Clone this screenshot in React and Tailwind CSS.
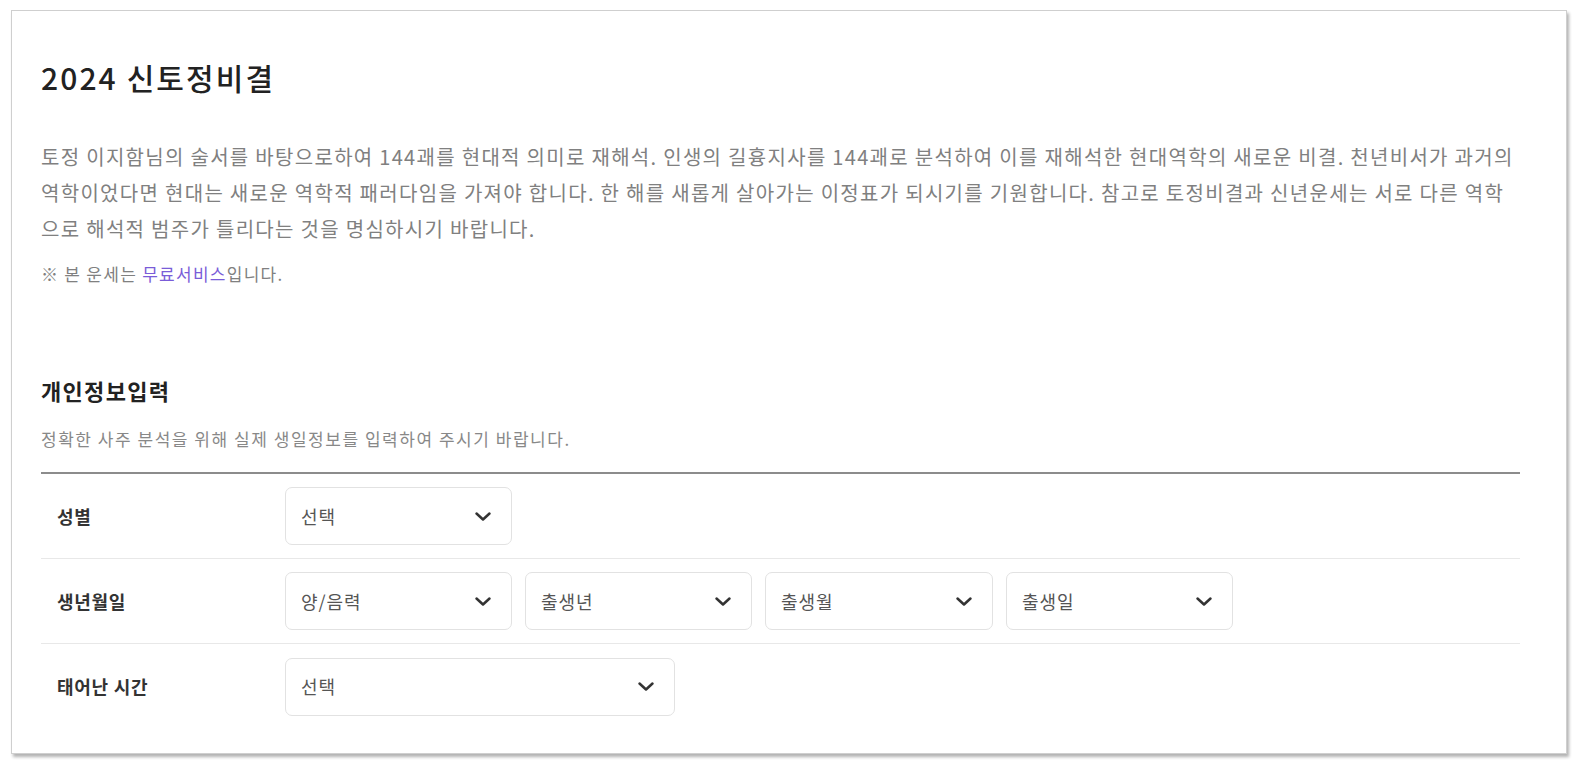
const font = { fontFamily: '"Noto Sans CJK KR", "Noto Sans", sans-serif' };

function Chevron() {
  return (
    <svg width="18" height="11" viewBox="0 0 18 11" fill="none" stroke="#333" strokeWidth="2.5" strokeLinecap="round" strokeLinejoin="round">
      <polyline points="2.5,2.5 9,8.5 15.5,2.5" />
    </svg>
  );
}

function Select({ label, width }) {
  return (
    <div
      className={`${width} h-[58px] flex items-center justify-between pl-[15px] pr-[19px] border border-[#e2e2e2] rounded-[7px] bg-white text-[18px] tracking-[0.05em] text-[#555]`}
    >
      <span>{label}</span>
      <Chevron />
    </div>
  );
}

function Row({ label, last, children }) {
  return (
    <div className={`flex items-center h-[85px] ${last ? '' : 'border-b border-[#e8e8e8]'}`}>
      <div className="w-[244px] pl-[16px] text-[18px] tracking-[0.04em] font-bold text-[#333]">{label}</div>
      <div className="flex items-center gap-[13px]">{children}</div>
    </div>
  );
}

export default function App() {
  return (
    <div className="min-h-screen bg-white pl-[11px] pt-[10px]" style={font}>
      <div className="w-[1556px] h-[744px] border border-[#cfcfcf] bg-white shadow-[2px_3px_3px_rgba(0,0,0,0.3)] pl-[29px] pr-[46px] overflow-hidden">
        <h1 className="mt-[46px] text-[30px] leading-[40px] tracking-[0.07em] font-medium text-[#222]">2024 신토정비결</h1>

        <p className="mt-[42px] text-[20px] leading-[36px] tracking-[1.3px] text-[#808080]">
          토정 이지함님의 술서를 바탕으로하여 144괘를 현대적 의미로 재해석. 인생의 길흉지사를 144괘로 분석하여 이를 재해석한 현대역학의 새로운 비결. 천년비서가 과거의 역학이었다면 현대는 새로운 역학적 패러다임을 가져야 합니다. 한 해를 새롭게 살아가는 이정표가 되시기를 기원합니다. 참고로 토정비결과 신년운세는 서로 다른 역학으로 해석적 범주가 틀리다는 것을 명심하시기 바랍니다.
        </p>
        <p className="mt-[14px] text-[17px] leading-[26px] tracking-[0.075em] text-[#808080]">
          ※ 본 운세는 <span className="text-[#7a5cd8]">무료서비스</span>입니다.
        </p>

        <h2 className="mt-[88px] text-[22px] leading-[30px] tracking-[0.06em] font-bold text-[#222]">개인정보입력</h2>
        <p className="mt-[21px] text-[17px] leading-[26px] tracking-[0.09em] text-[#888]">
          정확한 사주 분석을 위해 실제 생일정보를 입력하여 주시기 바랍니다.
        </p>

        <div className="mt-[20px] border-t-2 border-[#8c8c8c]">
          <Row label="성별">
            <Select label="선택" width="w-[227px]" />
          </Row>
          <Row label="생년월일">
            <Select label="양/음력" width="w-[227px]" />
            <Select label="출생년" width="w-[227px]" />
            <Select label="출생월" width="w-[228px]" />
            <Select label="출생일" width="w-[227px]" />
          </Row>
          <Row label="태어난 시간" last>
            <Select label="선택" width="w-[390px]" />
          </Row>
        </div>
      </div>
    </div>
  );
}
